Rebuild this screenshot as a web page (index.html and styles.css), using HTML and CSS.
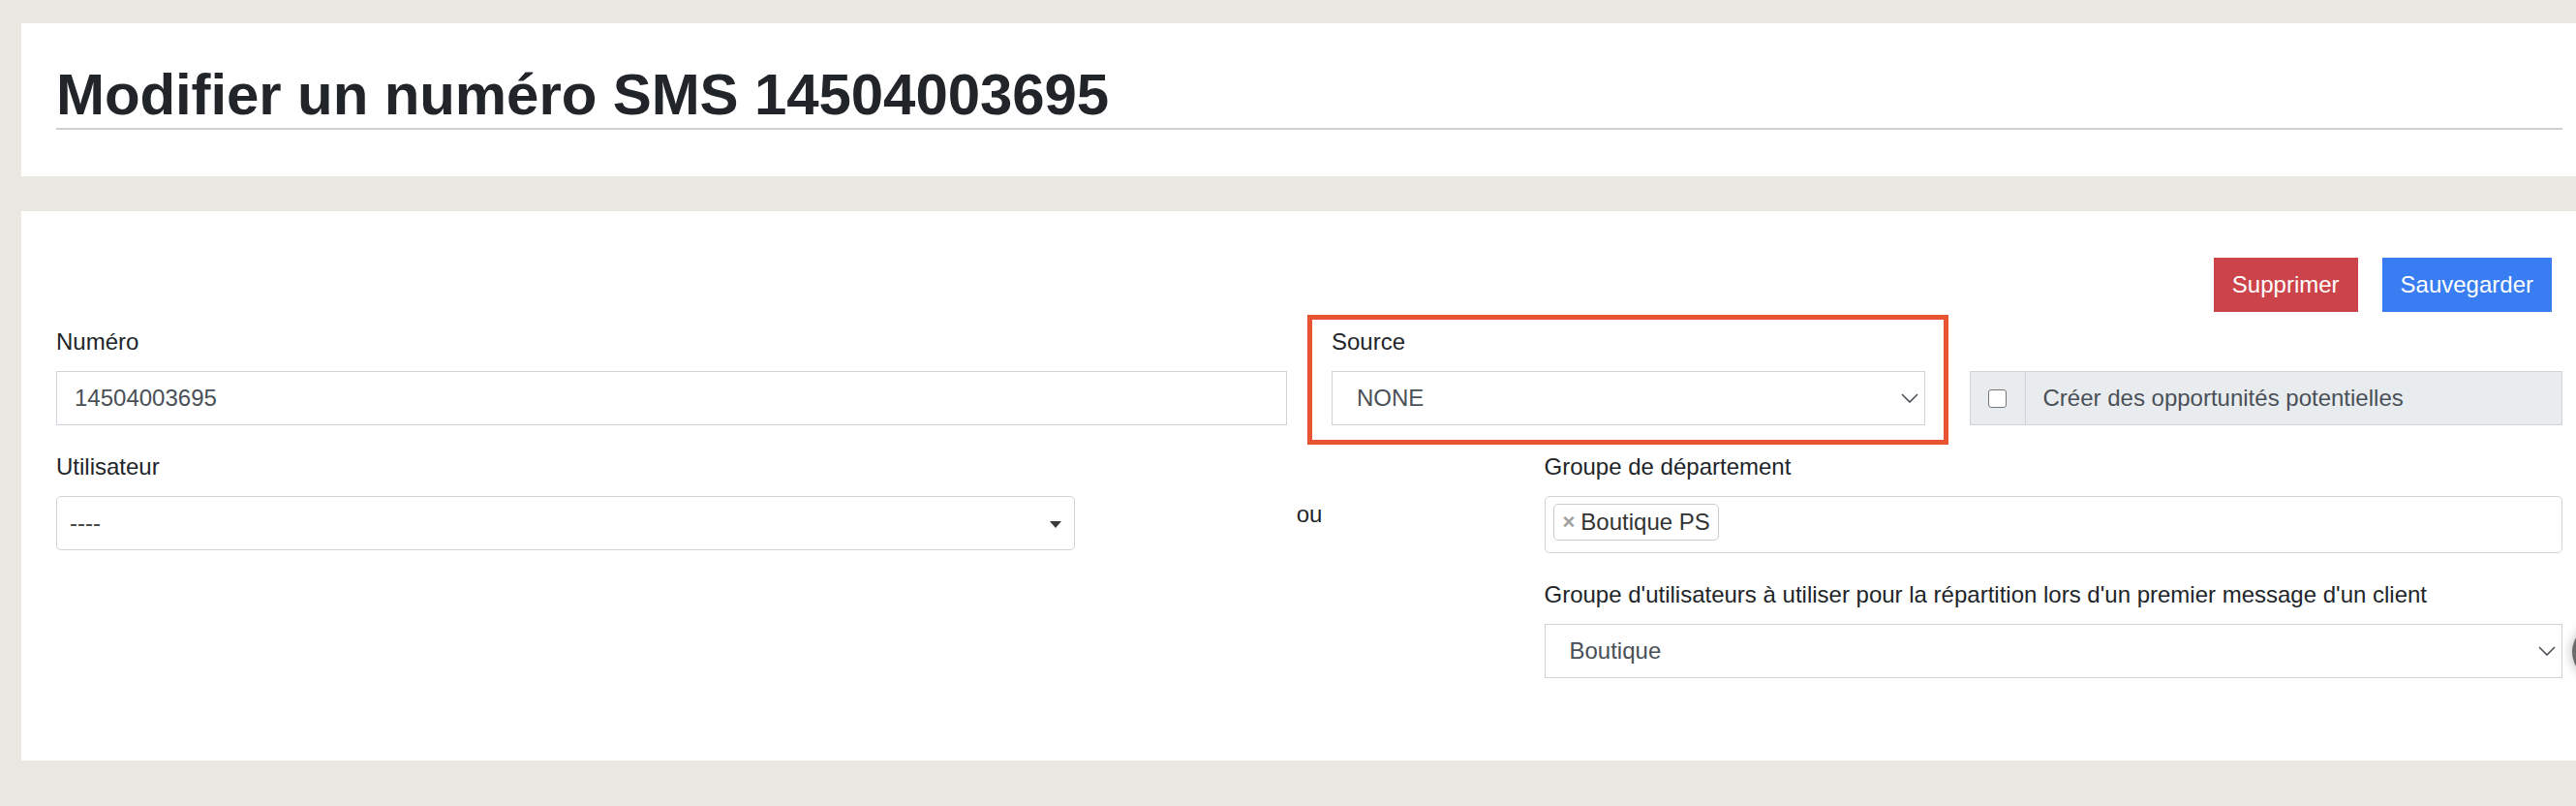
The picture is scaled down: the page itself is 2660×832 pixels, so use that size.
FILE: index.html
```html
<!DOCTYPE html>
<html lang="fr">
<head>
<meta charset="UTF-8">
<meta name="viewport" content="width=device-width, initial-scale=1.0">
<title>Modifier un numéro SMS</title>
<link rel="stylesheet" href="styles.css">
</head>
<body>

<div class="page">
  <div class="card card-head">
    <h1 class="page-title">Modifier un numéro SMS 14504003695</h1>
  </div>

  <div class="card card-form">
    <div class="actions">
      <button class="btn btn-danger">Supprimer</button>
      <button class="btn btn-primary">Sauvegarder</button>
    </div>

    <div class="form-grid">
      <div class="form-group span-6">
        <label>Numéro</label>
        <input class="form-control" type="text" value="14504003695">
      </div>

      <div class="form-group span-3 highlighted">
        <label>Source</label>
        <div class="form-control select">
          <span>NONE</span>
          <svg class="chevron" width="18" height="10" viewBox="0 0 18 10"><path d="M1 1l8 8 8-8" fill="none" stroke="#4a4f55" stroke-width="1.6"/></svg>
        </div>
      </div>

      <div class="form-group span-3 no-label">
        <div class="input-group">
          <div class="addon"><span class="checkbox"></span></div>
          <div class="addon-text">Créer des opportunités potentielles</div>
        </div>
      </div>

      <div class="form-group span-5">
        <label>Utilisateur</label>
        <div class="select2">
          <span class="select2-value">----</span>
          <span class="select2-arrow"></span>
        </div>
      </div>

      <div class="or span-2">ou</div>

      <div class="form-group span-5">
        <label>Groupe de département</label>
        <div class="select2 select2-multi">
          <span class="tag"><span class="tag-x">×</span>Boutique PS</span>
        </div>
      </div>

      <div class="form-group span-5 start-8">
        <label>Groupe d'utilisateurs à utiliser pour la répartition lors d'un premier message d'un client</label>
        <div class="form-control select">
          <span>Boutique</span>
          <svg class="chevron" width="18" height="10" viewBox="0 0 18 10"><path d="M1 1l8 8 8-8" fill="none" stroke="#4a4f55" stroke-width="1.6"/></svg>
        </div>
      </div>
    </div>
  </div>

  <div class="side-bubble"></div>
</div>

</body>
</html>
```

FILE: styles.css
```css
html, body {
  margin: 0;
  height: 100%;
  overflow: hidden;
}

body {
  background-color: #e8e7e2;
  font-family: "Liberation Sans", Arial, sans-serif;
  font-size: 24px;
  line-height: 36px;
  color: #212529;
}

.page {
  position: relative;
  padding: 24px 0 0 22px;
}

.card {
  background-color: #fff;
}

.card-head {
  padding: 41px 14px 48px 36px;
}

.page-title {
  margin: 0;
  font-size: 60px;
  line-height: 66px;
  font-weight: bold;
  letter-spacing: -0.1px;
  color: #212529;
  padding-bottom: 1px;
  border-bottom: 2px solid #d0d0d0;
}

.card-form {
  margin-top: 36px;
  padding: 48px 14px 60px 36px;
}

.actions {
  display: flex;
  justify-content: flex-end;
  gap: 25px;
  margin: 0 11px 13px 0;
}

.btn {
  font-family: inherit;
  font-size: 24px;
  line-height: 36px;
  color: #fff;
  padding: 9px 18px;
  border: 1px solid transparent;
  border-radius: 0;
  cursor: pointer;
}

.btn-danger {
  background-color: #cc444a;
}

.btn-primary {
  background-color: #387df2;
}

.form-grid {
  display: grid;
  grid-template-columns: repeat(12, 1fr);
  column-gap: 46px;
}

.span-6 { grid-column: span 6; }
.span-5 { grid-column: span 5; }
.span-3 { grid-column: span 3; }
.span-2 { grid-column: span 2; }
.start-8 { grid-column: 8 / span 5; }

.form-group {
  margin-bottom: 25px;
}

.form-group label {
  display: block;
  margin-bottom: 12px;
}

.no-label {
  padding-top: 48px;
}

.form-control {
  display: block;
  box-sizing: border-box;
  width: 100%;
  height: 56px;
  padding: 0 18px;
  font-family: inherit;
  font-size: 24px;
  color: #495057;
  background-color: #fff;
  border: 1px solid #ced4da;
  border-radius: 0;
}

.select {
  display: flex;
  align-items: center;
  justify-content: space-between;
  padding: 0 6px 0 25px;
}

.chevron {
  display: block;
}

.highlighted {
  position: relative;
}

.highlighted::before {
  content: "";
  position: absolute;
  top: -10px;
  left: -25px;
  right: -24px;
  bottom: -20px;
  border: 5px solid #e8542f;
  pointer-events: none;
}

.input-group {
  display: flex;
  height: 56px;
  box-sizing: border-box;
  border: 1px solid #ced4da;
  background-color: #e9ecef;
  color: #495057;
}

.addon {
  width: 56px;
  display: flex;
  align-items: center;
  justify-content: center;
  border-right: 1px solid #ced4da;
}

.checkbox {
  width: 17px;
  height: 17px;
  background-color: #fff;
  border: 1px solid #767676;
  border-radius: 3px;
}

.addon-text {
  display: flex;
  align-items: center;
  padding-left: 18px;
}

.select2 {
  position: relative;
  box-sizing: border-box;
  height: 56px;
  display: flex;
  align-items: center;
  padding-left: 13px;
  border: 1px solid #cfd3d8;
  border-radius: 5px;
  background-color: #fff;
  color: #444;
}

.select2-arrow {
  position: absolute;
  right: 13px;
  top: 25px;
  border-style: solid;
  border-width: 7px 6px 0 6px;
  border-color: #3a3a3a transparent transparent transparent;
}

.select2-multi {
  height: 59px;
  align-items: flex-start;
  padding: 7px 8px;
}

.tag {
  display: inline-flex;
  align-items: center;
  height: 38px;
  box-sizing: border-box;
  padding: 0 8px 0 9px;
  border: 1px solid #c8ccd1;
  border-radius: 5px;
  background-color: #fff;
  color: #333;
}

.tag-x {
  color: #a0a0a0;
  font-weight: bold;
  font-size: 22px;
  margin-right: 6px;
}

.or {
  text-align: center;
  padding-top: 49px;
}

.side-bubble {
  position: absolute;
  top: 645px;
  right: -52px;
  width: 56px;
  height: 56px;
  border-radius: 50%;
  background-color: #6a6a6a;
  box-shadow: 0 0 12px rgba(0, 0, 0, 0.3);
}
```
